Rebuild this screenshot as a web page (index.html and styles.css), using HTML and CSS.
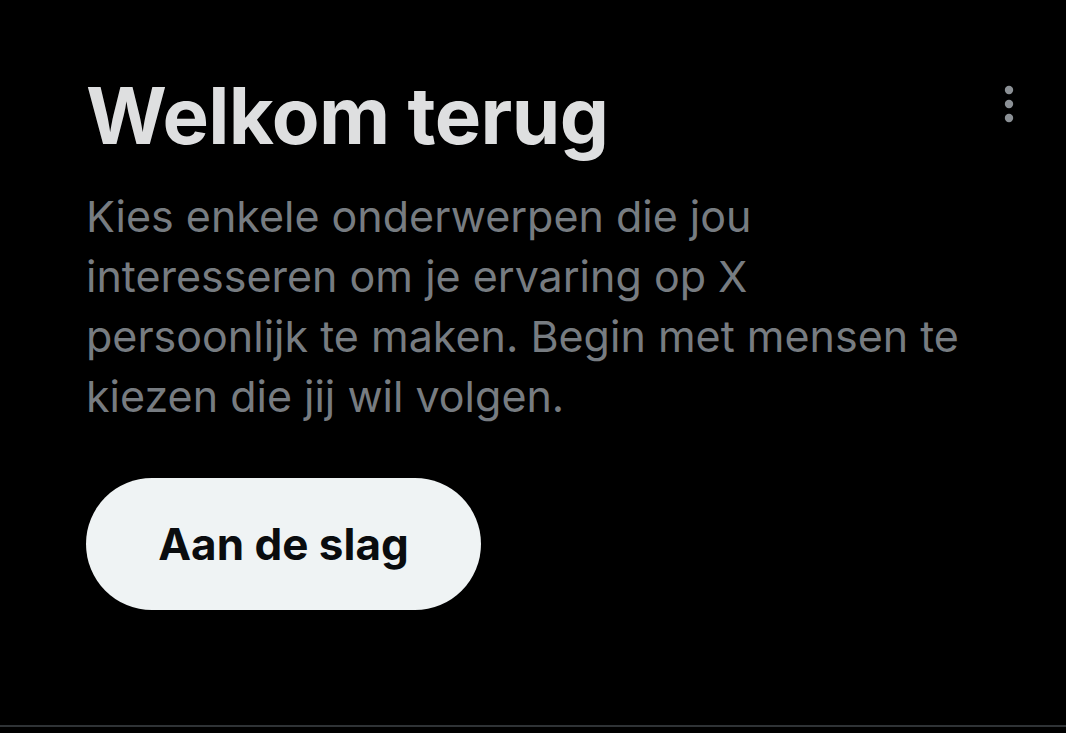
FILE: index.html
```html
<!DOCTYPE html>
<html lang="nl">
<head>
<meta charset="utf-8">
<link rel="stylesheet" href="styles.css">
</head>
<body>
<div class="card">
  <div class="header">
    <h1 class="title">Welkom terug</h1>
    <button class="more" aria-label="Meer">
      <svg width="12" height="40" viewBox="0 0 12 40"><circle cx="6" cy="6" r="4.2"/><circle cx="6" cy="20" r="4.2"/><circle cx="6" cy="34" r="4.2"/></svg>
    </button>
  </div>
  <p class="desc">Kies enkele onderwerpen die jou interesseren om je ervaring op X persoonlijk te maken. Begin met mensen te kiezen die jij wil volgen.</p>
  <button class="cta">Aan de slag</button>
</div>
</body>
</html>
```
FILE: styles.css
```css
html, body {
  margin: 0;
  padding: 0;
  background: #000;
  height: 100%;
}
body {
  font-family: "Inter", "Open Sans", sans-serif;
}
.card {
  box-sizing: border-box;
  height: 727px;
  border-bottom: 2px solid #2f3336;
  padding: 68px 40px 0 86px;
}
.header {
  display: flex;
  justify-content: space-between;
  align-items: flex-start;
}
.title {
  margin: 0;
  color: #dedfe0;
  font-size: 78px;
  font-weight: 700;
  line-height: 96px;
  letter-spacing: -0.6px;
}
.more {
  background: none;
  border: 0;
  padding: 0;
  margin: 16px 11px 0 0;
  fill: #8b9095;
}
.desc {
  margin: 22px 0 0;
  width: 888px;
  color: #777c81;
  font-size: 43px;
  line-height: 60px;
  font-weight: 400;
}
.cta {
  margin-top: 52px;
  width: 395px;
  height: 132px;
  border: 0;
  border-radius: 66px;
  background: #eff3f4;
  color: #0a0c0e;
  font-family: inherit;
  font-size: 44px;
  font-weight: 700;
}
```
